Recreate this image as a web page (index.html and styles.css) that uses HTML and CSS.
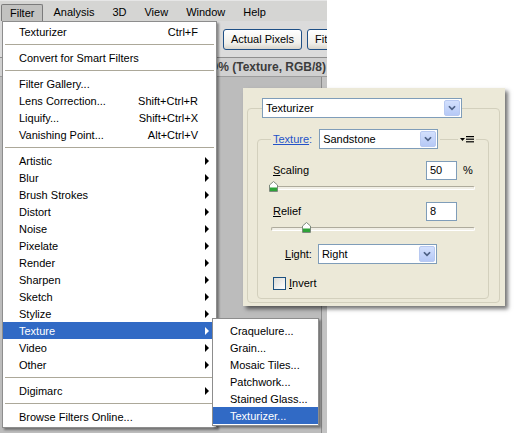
FILE: index.html
```html
<!DOCTYPE html>
<html>
<head>
<meta charset="utf-8">
<title>Filter menu</title>
<link rel="stylesheet" href="styles.css">
</head>
<body>
<div class="screen">
  <div class="ps">
    <div class="menubar">
      <span class="mb-item active">Filter</span>
      <span class="mb-item">Analysis</span>
      <span class="mb-item">3D</span>
      <span class="mb-item">View</span>
      <span class="mb-item">Window</span>
      <span class="mb-item">Help</span>
    </div>
    <div class="toolbar">
      <button class="tb-btn first">Actual Pixels</button>
      <button class="tb-btn">Fit Screen</button>
    </div>
    <div class="doctab"><span class="doctitle">Untitled-1 @ 50% (Texture, RGB/8)</span></div>
    <div class="canvas"></div>
  </div>

  <div class="menu">
    <div class="mi"><span>Texturizer</span><span class="sc">Ctrl+F</span></div>
    <div class="sep"></div>
    <div class="mi"><span>Convert for Smart Filters</span></div>
    <div class="sep"></div>
    <div class="mi"><span>Filter Gallery...</span></div>
    <div class="mi"><span>Lens Correction...</span><span class="sc">Shift+Ctrl+R</span></div>
    <div class="mi"><span>Liquify...</span><span class="sc">Shift+Ctrl+X</span></div>
    <div class="mi"><span>Vanishing Point...</span><span class="sc">Alt+Ctrl+V</span></div>
    <div class="sep"></div>
    <div class="mi sub"><span>Artistic</span><i class="arrow"></i></div>
    <div class="mi sub"><span>Blur</span><i class="arrow"></i></div>
    <div class="mi sub"><span>Brush Strokes</span><i class="arrow"></i></div>
    <div class="mi sub"><span>Distort</span><i class="arrow"></i></div>
    <div class="mi sub"><span>Noise</span><i class="arrow"></i></div>
    <div class="mi sub"><span>Pixelate</span><i class="arrow"></i></div>
    <div class="mi sub"><span>Render</span><i class="arrow"></i></div>
    <div class="mi sub"><span>Sharpen</span><i class="arrow"></i></div>
    <div class="mi sub"><span>Sketch</span><i class="arrow"></i></div>
    <div class="mi sub"><span>Stylize</span><i class="arrow"></i></div>
    <div class="mi sub hl"><span>Texture</span><i class="arrow"></i></div>
    <div class="mi sub"><span>Video</span><i class="arrow"></i></div>
    <div class="mi sub"><span>Other</span><i class="arrow"></i></div>
    <div class="sep"></div>
    <div class="mi sub"><span>Digimarc</span><i class="arrow"></i></div>
    <div class="sep"></div>
    <div class="mi"><span>Browse Filters Online...</span></div>
  </div>

  <div class="submenu">
    <div class="mi"><span>Craquelure...</span></div>
    <div class="mi"><span>Grain...</span></div>
    <div class="mi"><span>Mosaic Tiles...</span></div>
    <div class="mi"><span>Patchwork...</span></div>
    <div class="mi"><span>Stained Glass...</span></div>
    <div class="mi hl"><span>Texturizer...</span></div>
  </div>

  <div class="dialog">
    <fieldset class="grp outer">
      <legend class="combo wide">
        <span class="combo-text">Texturizer</span>
        <span class="ddbtn"><svg width="16" height="16" viewBox="0 0 16 16"><polyline points="4.5,6 8,9.5 11.5,6" fill="none" stroke="#4d6185" stroke-width="2"/></svg></span>
      </legend>
      <fieldset class="grp inner">
        <legend class="inner-legend">
          <span class="link"><u>Texture</u>:</span>
          <span class="combo mid">
            <span class="combo-text">Sandstone</span>
            <span class="ddbtn"><svg width="16" height="16" viewBox="0 0 16 16"><polyline points="4.5,6 8,9.5 11.5,6" fill="none" stroke="#4d6185" stroke-width="2"/></svg></span>
          </span>
          <span class="legend-line"></span>
          <span class="panel-menu"><svg width="14" height="7" viewBox="0 0 14 7"><polygon points="0,2 5,2 2.5,5" fill="#000"/><rect x="6" y="0" width="8" height="1.2" fill="#000"/><rect x="6" y="2.6" width="8" height="1.2" fill="#000"/><rect x="6" y="5.2" width="8" height="1.2" fill="#000"/></svg></span>
        </legend>
        <div class="body">
          <div class="row">
            <span class="lbl"><u>S</u>caling</span>
            <span class="field">50</span>
            <span class="unit">%</span>
          </div>
          <div class="slider">
            <div class="track"></div>
            <svg class="thumb" style="left:2px" width="9" height="11" viewBox="0 0 9 11"><path d="M0.5 4 L4.5 0.5 L8.5 4 L8.5 10.5 L0.5 10.5 Z" fill="#fff" stroke="#7d8a7d"/><rect x="1" y="6.5" width="7" height="3.5" fill="#2ea339"/></svg>
          </div>
          <div class="row relief">
            <span class="lbl"><u>R</u>elief</span>
            <span class="field">8</span>
            <span class="unit"></span>
          </div>
          <div class="slider">
            <div class="track"></div>
            <svg class="thumb" style="left:35px" width="9" height="11" viewBox="0 0 9 11"><path d="M0.5 4 L4.5 0.5 L8.5 4 L8.5 10.5 L0.5 10.5 Z" fill="#fff" stroke="#7d8a7d"/><rect x="1" y="6.5" width="7" height="3.5" fill="#2ea339"/></svg>
          </div>
          <div class="row light">
            <span class="lbl-fixed"><u>L</u>ight:</span>
            <span class="combo mid">
              <span class="combo-text">Right</span>
              <span class="ddbtn"><svg width="16" height="16" viewBox="0 0 16 16"><polyline points="4.5,6 8,9.5 11.5,6" fill="none" stroke="#4d6185" stroke-width="2"/></svg></span>
            </span>
          </div>
          <div class="row check">
            <span class="chk"></span>
            <span class="chk-lbl"><u>I</u>nvert</span>
          </div>
        </div>
      </fieldset>
    </fieldset>
  </div>
</div>
</body>
</html>
```

FILE: styles.css
```css
* { box-sizing: border-box; }
html, body { margin: 0; padding: 0; }
body {
  width: 520px;
  height: 433px;
  overflow: hidden;
  background: #fff;
  font-family: "Liberation Sans", Arial, sans-serif;
  font-size: 11px;
  color: #000;
}
.screen { position: relative; width: 520px; height: 433px; }

/* Photoshop window */
.ps {
  width: 327px;
  height: 433px;
  display: flex;
  flex-direction: column;
  background: #bcbcbc;
}
.menubar {
  height: 21px;
  flex: none;
  display: flex;
  align-items: flex-end;
  padding-left: 1px;
  background: #d5d5d3;
  border-top: 1px solid #e6e6e6;
}
.mb-item {
  height: 17px;
  line-height: 16px;
  padding: 0 9px;
  white-space: nowrap;
}
.mb-item.active {
  padding: 0 8px;
  background: #c2c2c0;
  border: 1px solid #7b7b7b;
  border-bottom: none;
  border-radius: 2px 2px 0 0;
  margin-right: 1px;
}
.toolbar {
  height: 36px;
  flex: none;
  display: flex;
  align-items: center;
  gap: 5px;
  background: #dbdbdb;
  overflow: hidden;
  white-space: nowrap;
}
.tb-btn {
  flex: none;
  height: 21px;
  padding: 0 7px;
  font: 11px "Liberation Sans", Arial, sans-serif;
  color: #000;
  border: 1px solid #1e4f86;
  border-radius: 3px;
  background: linear-gradient(#ffffff, #f0efea 70%, #d9d5cc);
}
.tb-btn.first { margin-left: 223px; }
.doctab {
  height: 20px;
  flex: none;
  display: flex;
  align-items: center;
  justify-content: flex-end;
  padding-right: 1px;
  background: #d0d0d0;
  border-top: 1px solid #8e8e8e;
  border-bottom: 1px solid #9c9c9c;
  white-space: nowrap;
  overflow: hidden;
}
.doctitle {
  font-weight: bold;
  font-size: 12px;
  color: #3c3c3c;
}
.canvas {
  flex: 1;
  background: #bcbcbc;
  border-right: 5px solid #c3c3c3;
  box-shadow: inset -1px 0 0 #8c8c8c;
}

/* Menus */
.menu, .submenu {
  position: absolute;
  background: #fff;
  border: 1px solid #8d8d8d;
  box-shadow: 2px 2px 2px rgba(0, 0, 0, 0.38);
}
.menu {
  left: 2px;
  top: 21px;
  width: 215px;
  padding: 1px 0 2px;
}
.submenu {
  left: 212px;
  top: 318px;
  width: 107px;
  padding: 3px 0 1px;
}
.mi {
  height: 17px;
  display: flex;
  align-items: center;
  padding: 0 18px 0 16px;
  white-space: nowrap;
}
.mi .sc { margin-left: auto; }
.mi.sub { padding-right: 7px; }
.submenu .mi { padding-left: 17px; }
.mi.hl { background: #316ac5; color: #fff; }
.arrow {
  margin-left: auto;
  width: 0;
  height: 0;
  border-left: 4px solid #000;
  border-top: 4px solid transparent;
  border-bottom: 4px solid transparent;
}
.mi.hl .arrow { border-left-color: #fff; }
.sep {
  height: 9px;
  padding: 4px 2px 0;
}
.sep::after {
  content: "";
  display: block;
  height: 1px;
  background: #aca899;
}

/* Dialog */
.dialog {
  position: absolute;
  left: 243px;
  top: 88px;
  width: 262px;
  height: 218px;
  padding: 10px 0 0 4px;
  background: #ece9d8;
  box-shadow: 3px 3px 4px rgba(0, 0, 0, 0.55);
}
.grp {
  margin: 0;
  padding: 0;
  min-width: 0;
  border: 1px solid #d3d0bd;
  border-radius: 4px;
}
.outer { width: 253px; padding-bottom: 3px; }
.outer > legend { margin-left: 14px; }
.inner {
  margin: 11px 0 0 9px;
  width: 232px;
}
.inner-legend {
  margin-left: 13px;
  padding: 0 2px;
  display: flex;
  align-items: center;
}
.link { color: #2453c8; margin-right: 7px; }
.legend-line {
  width: 18px;
  height: 1px;
  background: #d3d0bd;
  margin: 0 2px;
}
.panel-menu { display: flex; align-items: center; height: 8px; }
.panel-menu svg { display: block; }

.combo {
  display: flex;
  align-items: center;
  height: 20px;
  padding: 0 1px 0 3px;
  background: #fff;
  border: 1px solid #7f9db9;
}
.combo.wide { width: 200px; }
.combo.mid { width: 119px; }
.combo-text { flex: 1; white-space: nowrap; }
.ddbtn {
  width: 16px;
  height: 16px;
  border-radius: 2px;
  border: 1px solid #b8c9f1;
  background: linear-gradient(#d3e0fd, #b6c9f6);
  display: flex;
  align-items: center;
  justify-content: center;
}
.ddbtn svg { display: block; width: 14px; height: 14px; }

.body { padding: 11px 15px 8px; }
.row {
  display: flex;
  align-items: center;
  height: 20px;
}
.lbl { flex: 1; }
.field {
  width: 31px;
  height: 19px;
  padding-left: 3px;
  line-height: 17px;
  background: #fff;
  border: 1px solid #7f9db9;
}
.unit { width: 10px; margin-left: 6px; }
.slider {
  position: relative;
  width: 204px;
  height: 12px;
  margin: 1px 0 0 -2px;
}
.track {
  position: absolute;
  left: 0;
  right: 0;
  top: 5px;
  height: 4px;
  border-radius: 2px;
  border: 1px solid #aeab9c;
  border-right-color: #fff;
  border-bottom-color: #fff;
  background: #f1efe6;
}
.thumb {
  position: absolute;
  top: 0;
  margin-left: -4px;
  display: block;
}
.row.relief { margin-top: 8px; }
.row.light { margin-top: 10px; padding-left: 12px; }
.lbl-fixed { margin-right: 6px; }
.row.check { margin-top: 12px; height: 14px; }
.chk {
  width: 13px;
  height: 13px;
  border: 1px solid #1c5180;
  background: linear-gradient(135deg, #dcdcd6, #ffffff);
}
.chk-lbl { margin-left: 3px; }
```
